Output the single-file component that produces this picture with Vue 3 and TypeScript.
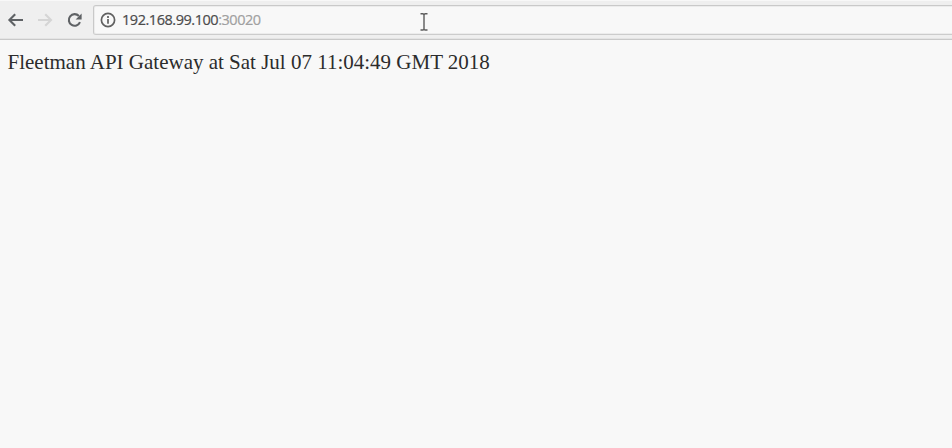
<script setup lang="ts">
const host: string = '192.168.99.100'
const port: string = ':30020'
const message: string = 'Fleetman API Gateway at Sat Jul 07 11:04:49 GMT 2018'
</script>

<template>
  <div class="browser">
    <header class="toolbar">
      <nav class="nav">
        <svg class="icon" width="18" height="18" viewBox="0 0 18 18" aria-label="Back">
          <path d="M17 9H3.8M9.2 3.2L3.4 9l5.8 5.8" />
        </svg>
        <svg class="icon disabled" width="18" height="18" viewBox="0 0 18 18" aria-label="Forward">
          <path d="M2 9h12.6M9.2 3.2L15 9l-5.8 5.8" />
        </svg>
        <svg class="icon" width="18" height="18" viewBox="0 0 18 18" aria-label="Reload">
          <path d="M14 11.2A5.8 5.8 0 1 1 12.9 5" />
          <path class="solid" d="M15.6 2.4v6H9.6z" />
        </svg>
      </nav>
      <div class="address">
        <svg class="info" width="16" height="16" viewBox="0 0 16 16" aria-label="Site information">
          <circle cx="8" cy="8" r="6.6" />
          <path d="M8 7.1v4.7M8 4.1v1.9" />
        </svg>
        <span class="url">{{ host }}<span class="port">{{ port }}</span></span>
      </div>
    </header>
    <main class="page"><span class="message">{{ message }}</span></main>
    <svg class="cursor" width="10" height="20" viewBox="0 0 10 20">
      <path d="M1.5 1.8h2.2q1.3 0 1.3 1.2v13.8q0 1.2-1.3 1.2H1.5M8.5 1.8H6.3Q5 1.8 5 3v13.8q0 1.2 1.3 1.2h2.2" />
    </svg>
  </div>
</template>

<style>
body {
  background: #f8f8f8;
  overflow: hidden;
}
</style>

<style scoped>
.browser {
  position: relative;
  height: 448px;
  background: #f8f8f8;
  overflow: hidden;
}
.toolbar {
  box-sizing: border-box;
  display: flex;
  height: 40px;
  padding-top: 4px;
  border-top: 1px solid #f8f8f8;
  border-bottom: 1px solid #c9c9c9;
  background: #efefef;
  box-shadow: inset 0 -1px #e4e4e4;
}
.nav {
  display: flex;
  align-items: center;
  gap: 12px;
  box-sizing: border-box;
  width: 93px;
  height: 30px;
  padding-left: 6px;
}
.icon {
  fill: none;
  stroke: #5f6265;
  stroke-width: 2.1;
}
.disabled {
  stroke: #d5d5d5;
}
.solid {
  fill: #5f6265;
  stroke: none;
}
.address {
  box-sizing: border-box;
  display: flex;
  flex: 1;
  align-items: center;
  gap: 6px;
  height: 30px;
  margin-right: -6px;
  padding-left: 6px;
  border: 1px solid #c9c9c9;
  border-bottom-color: #cccccc;
  border-radius: 3px;
  background: #f8f8f8;
  box-shadow: inset 0 0 0 1px #ececec;
}
.info {
  fill: none;
  stroke: #606060;
  stroke-width: 1.7;
}
.url {
  color: #4b4b4b;
  font: 14.5px/20px "Open Sans", "Noto Sans", sans-serif;
  letter-spacing: -0.46px;
  white-space: nowrap;
  -webkit-text-stroke: 0.2px currentColor;
}
.port {
  color: #a0a0a0;
}
.page {
  padding: 10px 7.5px;
}
.message {
  color: #2c2c2c;
  font: 21px/25px "Liberation Serif", serif;
  white-space: nowrap;
}
.cursor {
  position: absolute;
  top: 12px;
  left: 419px;
  fill: none;
  stroke: #5c5c5c;
  stroke-width: 1.4;
}
</style>
